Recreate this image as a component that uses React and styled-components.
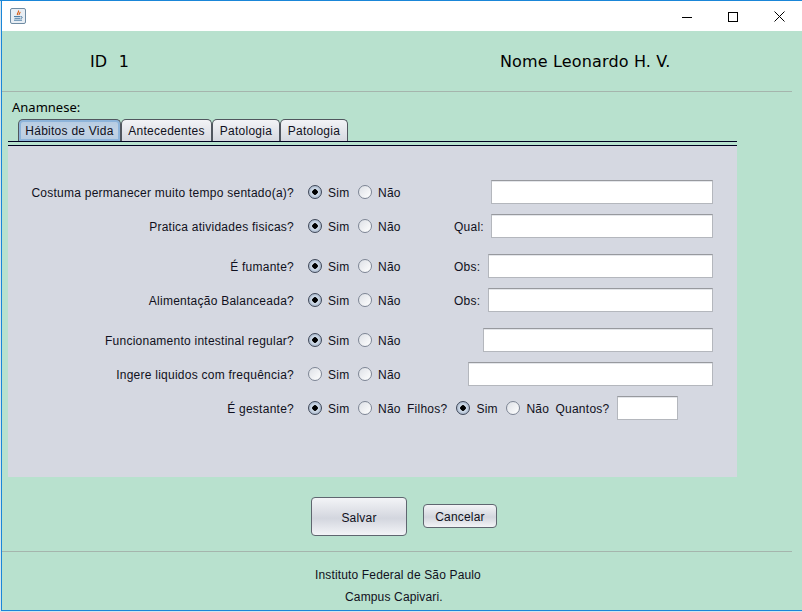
import React from 'react'
import styled, { createGlobalStyle } from 'styled-components'

const GlobalStyle = createGlobalStyle`
    html, body {
        margin: 0;
        padding: 0;
        background: #fff;
    }
`

const rows = [
    { label: 'Costuma permanecer muito tempo sentado(a)?', sim: true, inputWidth: 222, gapTop: 0 },
    { label: 'Pratica atividades fisicas?', sim: true, caption: 'Qual:', inputWidth: 222, gapTop: 10 },
    { label: 'É fumante?', sim: true, caption: 'Obs:', inputWidth: 225, gapTop: 16 },
    { label: 'Alimentação Balanceada?', sim: true, caption: 'Obs:', inputWidth: 225, gapTop: 10 },
    { label: 'Funcionamento intestinal regular?', sim: true, inputWidth: 230, gapTop: 16 },
    { label: 'Ingere liquidos com frequência?', sim: false, inputWidth: 245, gapTop: 10 },
]

const JavaIcon = () => (
    <svg width="16" height="16" viewBox="0 0 16 16">
        <rect x="0.5" y="0.5" width="15" height="15" rx="1.5" fill="#e8eef4" stroke="#6f8ba3" />
        <path d="M8.5 2.5c1 1.5-2 2.5-1 4.5M10 4c.5 1-1.500 1.500-.8 3" fill="none" stroke="#d9601a" strokeWidth="1.200" />
        <path d="M4 8.500h6.500M4.500 10.300h6M4 12.200h8" stroke="#4f7fa6" strokeWidth="1" />
        <path d="M11 8.500c1.500 0 1.500 1.800 0 2" fill="none" stroke="#4f7fa6" />
    </svg>
)

const Choice = ({ checked, children }) => (
    <ChoiceWrap>
        <RadioMark $checked={checked} />
        <ChoiceText>{children}</ChoiceText>
    </ChoiceWrap>
)

const YesNo = ({ sim }) => (
    <Pair>
        <Choice checked={sim}>Sim</Choice>
        <Choice checked={false}>Não</Choice>
    </Pair>
)

export default function App() {
    return (
        <Window>
            <GlobalStyle />
            <Frame>
                <TitleBar>
                    <JavaIcon />
                    <WindowControls>
                        <ControlButton aria-label="minimizar">
                            <svg width="10" height="10" viewBox="0 0 10 10"><path d="M0 5.500h10" stroke="#000" /></svg>
                        </ControlButton>
                        <ControlButton aria-label="maximizar">
                            <svg width="10" height="10" viewBox="0 0 10 10"><rect x="0.500" y="0.500" width="9" height="9" fill="none" stroke="#000" /></svg>
                        </ControlButton>
                        <ControlButton aria-label="fechar">
                            <svg width="11" height="11" viewBox="0 0 11 11"><path d="M0.500 0.500l10 10M10.500 0.500l-10 10" stroke="#000" /></svg>
                        </ControlButton>
                    </WindowControls>
                </TitleBar>

                <Content>
                    <Header>
                        <IdText>ID&nbsp;&nbsp;1</IdText>
                        <NameText>Nome Leonardo H. V.</NameText>
                    </Header>

                    <SectionLabel>Anamnese:</SectionLabel>

                    <Tabs>
                        <Tab $active $width={103}>Hábitos de Vida</Tab>
                        <Tab $width={91}>Antecedentes</Tab>
                        <Tab $width={68}>Patologia</Tab>
                        <Tab $width={68}>Patologia</Tab>
                    </Tabs>
                    <TabRule />

                    <Panel>
                        {rows.map((row) => (
                            <Row key={row.label} $gapTop={row.gapTop}>
                                <RowLabel>{row.label}</RowLabel>
                                <YesNo sim={row.sim} />
                                <RowEnd>
                                    {row.caption && <Caption>{row.caption}</Caption>}
                                    <TextInput $width={row.inputWidth} />
                                </RowEnd>
                            </Row>
                        ))}
                        <Row $gapTop={10}>
                            <RowLabel>É gestante?</RowLabel>
                            <YesNo sim />
                            <Inline>Filhos?</Inline>
                            <SecondPair>
                                <YesNo sim />
                            </SecondPair>
                            <Inline>Quantos?</Inline>
                            <TextInput $width={61} />
                        </Row>
                    </Panel>

                    <Actions>
                        <SaveButton>Salvar</SaveButton>
                        <CancelButton>Cancelar</CancelButton>
                    </Actions>

                    <Footer>
                        <FooterLine>Instituto Federal de São Paulo</FooterLine>
                        <FooterLine $indent={30}>Campus Capivari.</FooterLine>
                    </Footer>
                </Content>
            </Frame>
        </Window>
    )
}

const Window = styled.div`
    width: 802px;
    height: 612px;
    box-sizing: border-box;
    border-top: 1px solid #1a86d8;
    padding: 0 0 1px 1px;
    background: #d3e4ee;
    font-family: "Liberation Sans", Arial, sans-serif;
    font-size: 12px;
    color: #101020;
`

const Frame = styled.div`
    height: 100%;
    box-sizing: border-box;
    border-left: 1px solid #1a86d8;
    border-bottom: 1px solid #1a86d8;
    display: flex;
    flex-direction: column;
    overflow: hidden;
`

const TitleBar = styled.div`
    height: 30px;
    flex: none;
    background: #fff;
    display: flex;
    align-items: center;
    justify-content: space-between;
    padding-left: 8px;
`

const WindowControls = styled.div`
    display: flex;
    align-items: center;
    height: 100%;
`

const ControlButton = styled.div`
    width: 46px;
    height: 100%;
    display: flex;
    align-items: center;
    justify-content: center;
    padding-top: 1px;
    box-sizing: border-box;
`

const Content = styled.div`
    flex: 1;
    background: #b8e1ce;
    display: flex;
    flex-direction: column;
    padding-right: 10px;
`

const Header = styled.div`
    height: 60px;
    flex: none;
    border-bottom: 1px solid #a5b5ad;
    display: flex;
    align-items: center;
    padding-left: 88px;
    font-family: "DejaVu Sans", sans-serif;
    font-size: 16px;
    letter-spacing: 0.15px;
    color: #000;
`

const IdText = styled.span`
    width: 410px;
    word-spacing: 0.5px;
`

const NameText = styled.span``

const SectionLabel = styled.div`
    height: 27px;
    line-height: 31px;
    flex: none;
    padding-left: 10px;
    font-family: "Noto Sans", sans-serif;
    font-size: 13px;
    color: #000;
`

const Tabs = styled.div`
    height: 22px;
    flex: none;
    display: flex;
    padding-left: 16px;
`

const Tab = styled.div`
    width: ${(p) => p.$width}px;
    box-sizing: border-box;
    border: 1px solid #50565e;
    border-bottom: 0;
    border-radius: 5px 5px 0 0;
    display: flex;
    align-items: center;
    justify-content: center;
    letter-spacing: 0.25px;
    background: ${(p) =>
        p.$active
            ? 'linear-gradient(#b4cbe2, #c3d3e4 55%, #b4cbe2)'
            : 'linear-gradient(#f2f3f6, #d6d9e0)'};
    box-shadow: ${(p) => (p.$active ? 'inset 0 0 0 2px #8db4da' : 'none')};
`

const TabRule = styled.div`
    height: 3px;
    flex: none;
    margin: 0 55px 0 6px;
    border-top: 1px solid #000020;
    border-bottom: 1px solid #000020;
`

const Panel = styled.div`
    height: 331px;
    flex: none;
    box-sizing: border-box;
    margin: 0 55px 0 6px;
    padding-top: 34px;
    background: #d5d8e1;
`

const Row = styled.div`
    height: 24px;
    margin-top: ${(p) => p.$gapTop}px;
    display: flex;
    align-items: center;
    letter-spacing: 0.25px;
`

const RowLabel = styled.div`
    width: 286px;
    flex: none;
    padding-top: 2px;
    text-align: right;
    white-space: nowrap;
`

const Pair = styled.div`
    display: flex;
    align-items: center;
`

const SecondPair = styled.div`
    margin-left: -5px;
`

const ChoiceWrap = styled.div`
    display: flex;
    align-items: center;
    gap: 6px;
    margin-left: 14px;
    width: 36px;
`

const ChoiceText = styled.span`
    padding-top: 2px;
`

const RadioMark = styled.span`
    width: 14px;
    height: 14px;
    flex: none;
    box-sizing: border-box;
    border-radius: 50%;
    border: 1px solid ${(p) => (p.$checked ? '#3f4859' : '#7d8594')};
    background: ${(p) =>
        p.$checked
            ? 'radial-gradient(circle, #000 0 2.5px, #d3deeb 3px, #8fa0b8 100%)'
            : 'linear-gradient(135deg, #dde0e6, #ffffff)'};
`

const RowEnd = styled.div`
    flex: 1;
    display: flex;
    align-items: center;
    justify-content: flex-end;
    padding-right: 24px;
`

const Caption = styled.span`
    width: 24px;
    padding-top: 2px;
    margin-right: auto;
    margin-left: 60px;
    white-space: nowrap;
`

const Inline = styled.span`
    margin-left: 13px;
    padding-top: 2px;
    white-space: nowrap;
`

const TextInput = styled.div`
    width: ${(p) => p.$width}px;
    height: 24px;
    flex: none;
    box-sizing: border-box;
    background: #fff;
    border: 1px solid #b4b7bd;
    border-top-color: #97999e;
    box-shadow: inset 0 1px 0 #e4e6ea;
    margin-left: 8px;
`

const Actions = styled.div`
    height: 75px;
    flex: none;
    box-sizing: border-box;
    border-bottom: 1px solid #a5b5ad;
    display: flex;
    align-items: flex-start;
    padding-left: 309px;
    padding-top: 20px;
    gap: 16px;
`

const ButtonBase = styled.div`
    box-sizing: border-box;
    display: flex;
    align-items: center;
    justify-content: center;
    padding-top: 2px;
    border: 1px solid #5f6670;
    border-radius: 4px;
    background: linear-gradient(#f3f4f7, #d3d6de 55%, #f3f4f7);
    color: #101020;
    letter-spacing: 0.2px;
`

const SaveButton = styled(ButtonBase)`
    width: 96px;
    height: 39px;
`

const CancelButton = styled(ButtonBase)`
    width: 74px;
    height: 24px;
    margin-top: 7px;
`

const Footer = styled.div`
    flex: 1;
    padding: 16px 0 0 313px;
    display: flex;
    flex-direction: column;
    gap: 8px;
`

const FooterLine = styled.div`
    height: 14px;
    line-height: 14px;
    padding-left: ${(p) => p.$indent || 0}px;
    letter-spacing: 0.15px;
`
